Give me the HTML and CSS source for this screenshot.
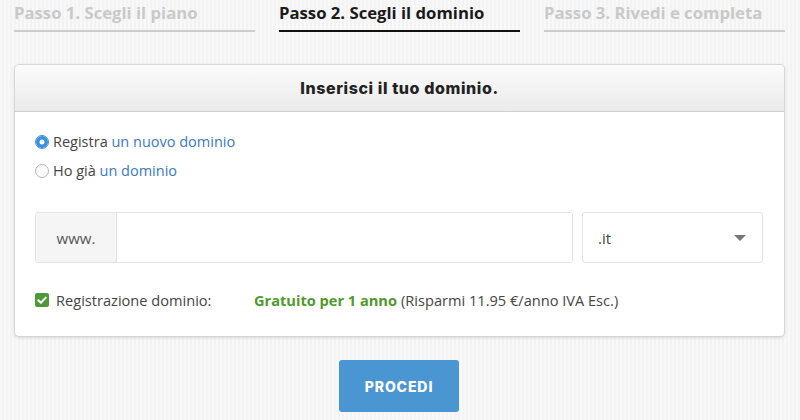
FILE: index.html
```html
<!DOCTYPE html>
<html lang="it">
<head>
<meta charset="utf-8">
<link rel="stylesheet" href="styles.css">
</head>
<body>
<div class="steps">
  <div class="step">Passo 1. Scegli il piano</div>
  <div class="step active">Passo 2. Scegli il dominio</div>
  <div class="step">Passo 3. Rivedi e completa</div>
</div>
<div class="card">
  <div class="card-head">Inserisci il tuo dominio.</div>
  <div class="card-body">
    <div class="radios">
      <label class="radio-row"><span class="radio checked"></span>Registra <span class="link">un nuovo dominio</span></label>
      <label class="radio-row"><span class="radio"></span>Ho già <span class="link">un dominio</span></label>
    </div>
    <div class="domain-row">
      <div class="input-group">
        <span class="addon">www.</span>
        <span class="field"></span>
      </div>
      <div class="select">
        <span>.it</span>
        <span class="caret"></span>
      </div>
    </div>
    <div class="reg-row">
      <span class="check"><svg width="14" height="14" viewBox="0 0 14 14"><rect x="0" y="0" width="14" height="14" rx="2" fill="#4a9a36"/><path d="M3.3 7.2 L5.9 9.7 L10.8 4.6" fill="none" stroke="#fff" stroke-width="2" stroke-linecap="round" stroke-linejoin="round"/></svg></span>
      <span class="reg-label">Registrazione dominio:</span>
      <span class="free">Gratuito per 1 anno</span>
      <span class="save">(Risparmi 11.95 €/anno IVA Esc.)</span>
    </div>
  </div>
</div>
<div class="actions">
  <button class="btn">PROCEDI</button>
</div>
</body>
</html>
```
FILE: styles.css
```css
html, body {
  margin: 0;
  padding: 0;
}
body {
  width: 800px;
  height: 420px;
  overflow: hidden;
  font-family: "Open Sans", "Liberation Sans", sans-serif;
  background-color: #f6f6f6;
  background-image: repeating-linear-gradient(90deg, #f8f8f8 0px, #f8f8f8 2px, #f3f3f3 2px, #f3f3f3 4px);
  color: #444;
}
.steps {
  display: flex;
  gap: 24px;
  padding: 0 15px 0 14px;
}
.step {
  flex: 1;
  font-weight: 700;
  font-size: 16.7px;
  line-height: 24px;
  padding-top: 1px;
  padding-bottom: 5px;
  color: #c9c9c9;
  border-bottom: 2px solid #cdcdcd;
}
.step.active {
  color: #1a1a1a;
  border-bottom-color: #111;
}
.card {
  margin: 32px 15px 0 14px;
  background: #fff;
  border: 1px solid #d6d6d6;
  border-radius: 5px;
  box-shadow: 0 1px 3px rgba(0,0,0,0.12);
  overflow: hidden;
}
.card-head {
  height: 46px;
  line-height: 46px;
  text-align: center;
  font-family: "Inter", "Liberation Sans", sans-serif;
  font-weight: 800;
  font-size: 16px;
  letter-spacing: 0.6px;
  color: #222;
  background: linear-gradient(#fbfbfb, #ebebeb);
  border-bottom: 1px solid #cfcfcf;
}
.card-body {
  padding: 19px 21px 25px 20px;
}
.radios {
  display: flex;
  flex-direction: column;
  gap: 7px;
}
.radio-row {
  display: flex;
  align-items: center;
  font-size: 14.5px;
  line-height: 22px;
  color: #444;
  white-space: pre;
}
.radio {
  width: 12px;
  height: 12px;
  border-radius: 50%;
  border: 1px solid #b5b5b5;
  background: #fafafa;
  margin-right: 4px;
  box-sizing: content-box;
}
.radio.checked {
  border-color: #3b8fe0;
  background: #fff;
  box-shadow: inset 0 0 0 3.5px #3b8fe0;
}
.link {
  color: #3a78c4;
}
.domain-row {
  display: flex;
  gap: 9px;
  margin-top: 30px;
}
.input-group {
  display: flex;
  width: 538px;
  height: 51px;
  border: 1px solid #e3e3e3;
  border-radius: 3px;
  box-sizing: border-box;
  overflow: hidden;
}
.addon {
  width: 80px;
  background: #f5f5f5;
  border-right: 1px solid #e3e3e3;
  display: flex;
  align-items: center;
  justify-content: center;
  font-size: 15px;
  color: #555;
}
.field {
  flex: 1;
  background: #fff;
}
.select {
  width: 181px;
  height: 51px;
  box-sizing: border-box;
  border: 1px solid #e3e3e3;
  border-radius: 3px;
  display: flex;
  align-items: center;
  justify-content: space-between;
  padding: 0 16px 0 15px;
  font-size: 15px;
  color: #444;
}
.caret {
  width: 0;
  height: 0;
  border-left: 6px solid transparent;
  border-right: 6px solid transparent;
  border-top: 6px solid #777;
}
.reg-row {
  display: flex;
  align-items: center;
  margin-top: 26px;
  font-size: 14.6px;
  line-height: 22px;
  color: #444;
}
.check {
  display: flex;
  width: 14px;
  height: 14px;
  margin-right: 7px;
}
.reg-label {
  width: 198px;
}
.free {
  color: #4f9a2c;
  font-weight: 700;
  margin-right: 4px;
}
.actions {
  display: flex;
  justify-content: center;
  padding-top: 23px;
  padding-right: 2px;
}
.btn {
  width: 120px;
  height: 52px;
  border: 0;
  border-radius: 3px;
  background: #4a96d3;
  color: #fff;
  font-family: "Inter", "Liberation Sans", sans-serif;
  font-weight: 800;
  font-size: 14px;
  letter-spacing: 0.9px;
  cursor: pointer;
}
```
